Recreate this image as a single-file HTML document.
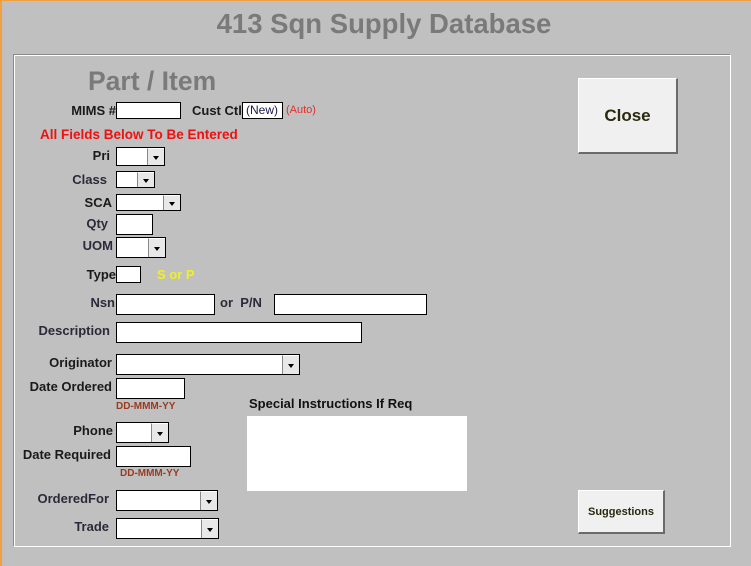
<!DOCTYPE html>
<html><head><meta charset="utf-8"><style>
*{margin:0;padding:0;box-sizing:border-box}
body{width:751px;height:566px;background:#c0c0c0;position:relative;overflow:hidden;font-family:"Liberation Sans",Arial,sans-serif}
.a{position:absolute;white-space:nowrap}
.l{position:absolute;font-size:13px;font-weight:bold;color:#1a1a1a;text-align:right;white-space:nowrap}
.g{color:#2a2a3a}
.i{position:absolute;background:#fff;border:1px solid #000}
.d{position:absolute;background:#fff;border:1px solid #000}
.d::after{content:"";position:absolute;right:0;top:0;bottom:0;width:16px;background:#e8e8e8;border-left:1px solid #888;border-top:1px solid #fff}
.d::before{content:"";position:absolute;right:5px;top:50%;margin-top:-1px;border-left:3px solid transparent;border-right:3px solid transparent;border-top:4px solid #000;z-index:2}
.btn{position:absolute;background:#f0f0f0;border-top:1px solid #fff;border-left:1px solid #fff;border-right:2px solid #6a6a6a;border-bottom:2px solid #6a6a6a;font-weight:bold;color:#2a2a10;display:flex;align-items:center;justify-content:center}
.dt{position:absolute;font-size:10px;font-weight:bold;color:#9a3a20}
</style></head><body>
<div class="a" style="left:0;top:0;width:751px;height:1px;background:#f5a040"></div>
<div class="a" style="left:0;top:0;width:2px;height:566px;background:#f5a040"></div>
<div class="a" style="left:0;width:768px;top:8px;text-align:center;font-size:27.5px;font-weight:bold;color:#7a7a7a">413 Sqn Supply Database</div>
<div class="a" style="left:13px;top:54px;width:718px;height:493px;border-top:1px solid #8a8a8a;border-left:1px solid #8a8a8a;border-right:1px solid #fff;border-bottom:1px solid #fff;box-shadow:inset 1px 1px 0 #fff"></div>
<div class="a" style="left:88px;top:66px;font-size:26.5px;font-weight:bold;color:#7a7a7a">Part / Item</div>
<div class="l" style="right:635px;top:103px">MIMS #</div>
<div class="i" style="left:116px;top:102px;width:65px;height:17px"></div>
<div class="l" style="left:192px;top:103px">Cust Ctl</div>
<div class="i" style="left:242px;top:102px;width:41px;height:17px;font-size:12px;color:#1a1a4a;padding-left:3px;line-height:15px">(New)</div>
<div class="a" style="left:286px;top:104px;font-size:11px;color:#e03030">(Auto)</div>
<div class="a" style="left:40px;top:127px;font-size:13.5px;font-weight:bold;color:#f01010">All Fields Below To Be Entered</div>
<div class="l" style="right:641px;top:148px">Pri</div>
<div class="d" style="left:116px;top:147px;width:49px;height:19px"></div>
<div class="l g" style="right:644px;top:172px">Class</div>
<div class="d" style="left:116px;top:171px;width:39px;height:17px"></div>
<div class="l" style="right:639px;top:195px">SCA</div>
<div class="d" style="left:116px;top:194px;width:65px;height:17px"></div>
<div class="l g" style="right:643px;top:216px">Qty</div>
<div class="i" style="left:116px;top:214px;width:37px;height:21px"></div>
<div class="l g" style="right:638px;top:238px">UOM</div>
<div class="d" style="left:116px;top:237px;width:50px;height:21px"></div>
<div class="l" style="right:635px;top:267px">Type</div>
<div class="i" style="left:116px;top:266px;width:25px;height:17px"></div>
<div class="a" style="left:157px;top:267px;font-size:13px;font-weight:bold;color:#f0f020">S or P</div>
<div class="l g" style="right:636px;top:295px">Nsn</div>
<div class="i" style="left:116px;top:294px;width:99px;height:21px"></div>
<div class="l" style="left:220px;top:295px;color:#2a2a3a">or&nbsp; P/N</div>
<div class="i" style="left:274px;top:294px;width:153px;height:21px"></div>
<div class="l g" style="right:641px;top:323px">Description</div>
<div class="i" style="left:116px;top:322px;width:246px;height:21px"></div>
<div class="l" style="right:639px;top:355px">Originator</div>
<div class="d" style="left:116px;top:354px;width:184px;height:21px"></div>
<div class="l" style="right:639px;top:379px">Date Ordered</div>
<div class="i" style="left:116px;top:378px;width:69px;height:21px"></div>
<div class="dt" style="left:116px;top:401px">DD-MMM-YY</div>
<div class="a" style="left:249px;top:396px;font-size:13px;font-weight:bold;color:#111">Special Instructions If Req</div>
<div class="a" style="left:247px;top:416px;width:220px;height:75px;background:#fff"></div>
<div class="l" style="right:638px;top:423px">Phone</div>
<div class="d" style="left:116px;top:422px;width:53px;height:21px"></div>
<div class="l" style="right:640px;top:447px">Date Required</div>
<div class="i" style="left:116px;top:446px;width:75px;height:21px"></div>
<div class="dt" style="left:120px;top:468px">DD-MMM-YY</div>
<div class="l g" style="right:642px;top:491px">OrderedFor</div>
<div class="d" style="left:116px;top:490px;width:102px;height:21px"></div>
<div class="l g" style="right:642px;top:519px">Trade</div>
<div class="d" style="left:116px;top:518px;width:103px;height:21px"></div>
<div class="btn" style="left:578px;top:78px;width:100px;height:76px;font-size:17px">Close</div>
<div class="btn" style="left:578px;top:490px;width:87px;height:44px;font-size:11px">Suggestions</div>
</body></html>
